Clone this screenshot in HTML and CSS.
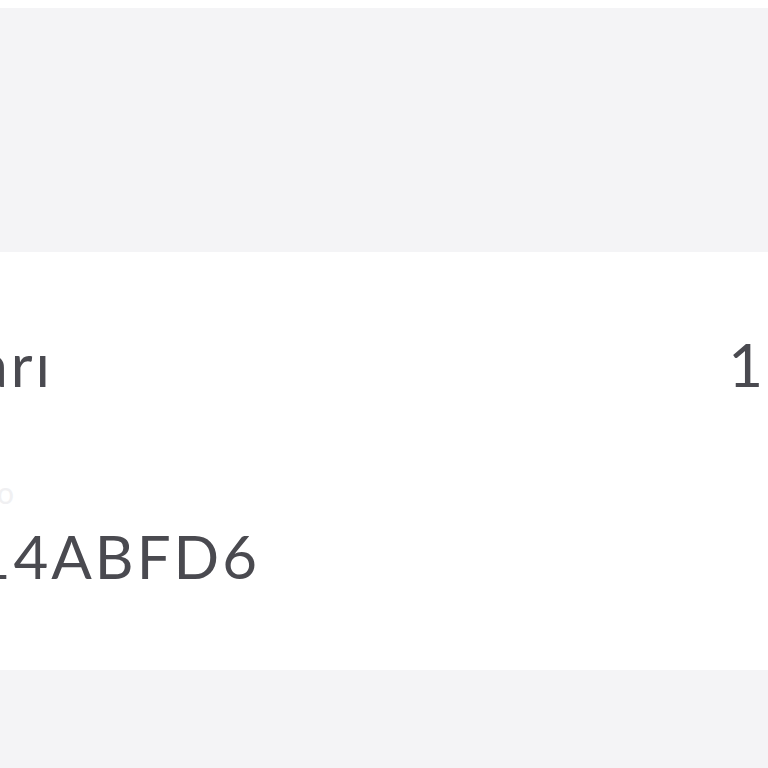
FILE: index.html
```html
<!DOCTYPE html>
<html lang="tr">
<head>
<meta charset="utf-8">
<title>Sipariş Detayı</title>
<link rel="stylesheet" href="styles.css">
</head>
<body>
  <div class="band band-top"></div>
  <section class="card">
    <div class="row">
      <div class="cell-left"><span class="label-main">Ürün Miktarı</span></div>
      <span class="qty">1</span>
    </div>
    <div class="meta">
      <div class="cell-left"><span class="label-sub">Sipariş No</span></div>
    </div>
    <div class="code-line">
      <div class="cell-code"><span class="code">8F2C91E14ABFD6</span></div>
    </div>
  </section>
  <div class="band band-bottom"></div>
</body>
</html>
```
FILE: styles.css
```css
html, body {
  margin: 0;
  padding: 0;
  background: #ffffff;
  height: 100%;
  overflow: hidden;
}

body {
  padding-top: 8px;
  box-sizing: border-box;
  display: flex;
  flex-direction: column;
  font-family: Lato, "Open Sans", sans-serif;
  color: #4a4a50;
}

.band {
  background: #f4f4f6;
}

.band-top {
  height: 244px;
  flex: none;
}

.band-bottom {
  flex: 1;
}

.card {
  flex: none;
  height: 418px;
  box-sizing: border-box;
  padding: 82px 2px 0 0;
  background: #ffffff;
  display: flex;
  flex-direction: column;
}

.row {
  display: flex;
  justify-content: space-between;
  align-items: flex-start;
  height: 60px;
}

.cell-left {
  width: 53px;
  display: flex;
  justify-content: flex-end;
  white-space: nowrap;
}

.label-main,
.qty,
.code {
  font-size: 60px;
  line-height: 60px;
  font-weight: 400;
  letter-spacing: 3px;
}

.meta {
  margin-top: 80px;
  height: 36px;
}

.meta .cell-left {
  width: 14px;
}

.label-sub {
  font-size: 30px;
  line-height: 36px;
  color: #f0f0f2;
}

.code-line {
  margin-top: 16px;
}

.cell-code {
  width: 260px;
  display: flex;
  justify-content: flex-end;
  white-space: nowrap;
}
```
